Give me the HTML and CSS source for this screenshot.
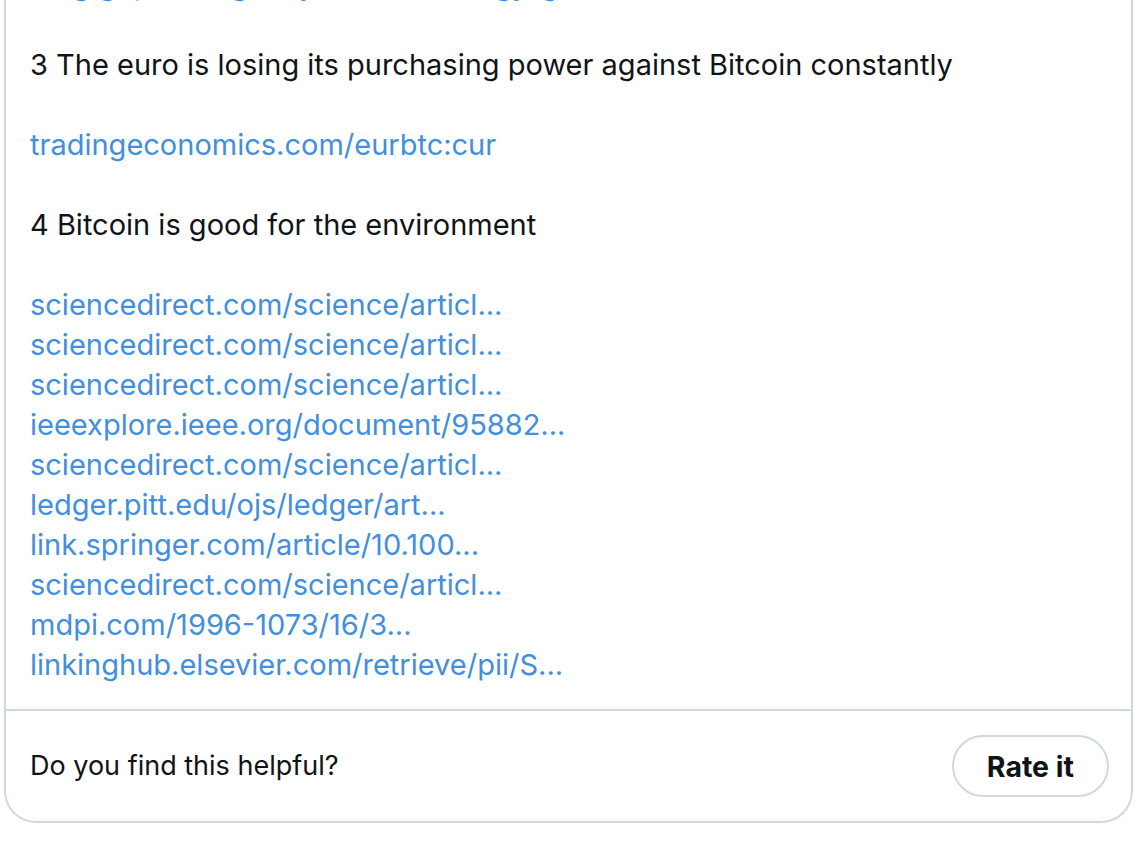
FILE: index.html
```html
<!DOCTYPE html>
<html lang="en">
<head>
<meta charset="utf-8">
<title>Community note</title>
<link rel="stylesheet" href="styles.css">
</head>
<body>
<div class="card">
  <div class="note">
    <p class="para"><a class="link" href="#">blog.gopher.org/why-bitcoin-energy-goes…</a></p>
    <p class="para">3 The euro is losing its purchasing power against Bitcoin constantly</p>
    <p class="para"><a class="link" href="#">tradingeconomics.com/eurbtc:cur</a></p>
    <p class="para">4 Bitcoin is good for the environment</p>
    <p class="para">
      <a class="link" href="#">sciencedirect.com/science/articl...</a><br>
      <a class="link" href="#">sciencedirect.com/science/articl...</a><br>
      <a class="link" href="#">sciencedirect.com/science/articl...</a><br>
      <a class="link" href="#">ieeexplore.ieee.org/document/95882...</a><br>
      <a class="link" href="#">sciencedirect.com/science/articl...</a><br>
      <a class="link" href="#">ledger.pitt.edu/ojs/ledger/art...</a><br>
      <a class="link" href="#">link.springer.com/article/10.100...</a><br>
      <a class="link" href="#">sciencedirect.com/science/articl...</a><br>
      <a class="link" href="#">mdpi.com/1996-1073/16/3...</a><br>
      <a class="link" href="#">linkinghub.elsevier.com/retrieve/pii/S...</a>
    </p>
  </div>
  <div class="footer">
    <span class="question">Do you find this helpful?</span>
    <button class="rate">Rate it</button>
  </div>
</div>
</body>
</html>
```

FILE: styles.css
```css
html, body {
  margin: 0;
  padding: 0;
  background: #ffffff;
  overflow: hidden;
}
body {
  font-family: Inter, "Liberation Sans", Arial, sans-serif;
  color: #0f1419;
}
.card {
  margin: -36px 3px 0 4px;
  border: 2px solid #cfd9de;
  border-top: none;
  border-radius: 0 0 32px 32px;
  background: #fff;
}
.note {
  padding: 1px 24px 24px 24px;
  font-size: 29px;
  line-height: 40px;
}
.para {
  margin: 0 0 40px 0;
}
.para:last-child {
  margin-bottom: 0;
}
.link {
  color: #418fde;
  text-decoration: none;
}
.footer {
  border-top: 2px solid #cfd9de;
  display: flex;
  align-items: center;
  justify-content: space-between;
  padding: 24px 22px 24px 24px;
}
.question {
  font-size: 27px;
  line-height: 36px;
}
.rate {
  font-family: Inter, "Liberation Sans", Arial, sans-serif;
  font-weight: 700;
  font-size: 28.5px;
  color: #0f1419;
  background: #fff;
  border: 2px solid #cfd9de;
  border-radius: 999px;
  height: 62px;
  padding: 0 33px;
}
```
